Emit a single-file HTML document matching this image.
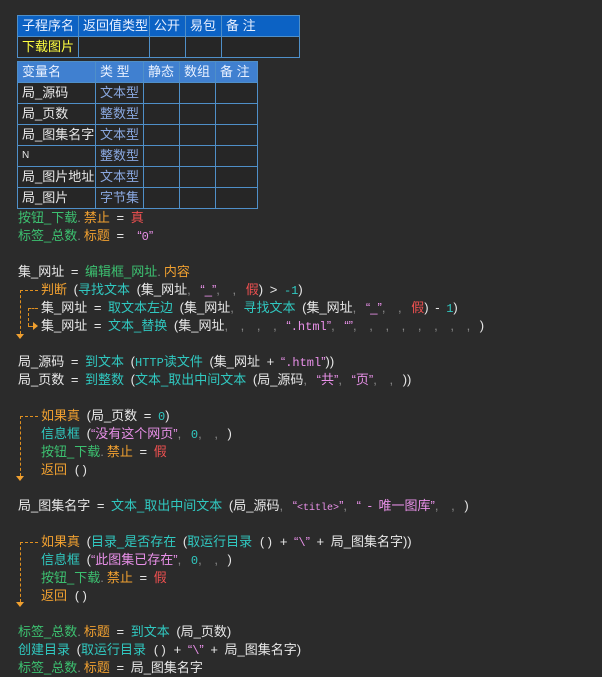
<!DOCTYPE html>
<html><head><meta charset="utf-8"><style>
body{margin:0;width:602px;height:664px;background:#2b2b2b;overflow:hidden;position:relative;font-family:"Liberation Sans","Noto Sans CJK SC","WenQuanYi Zen Hei",sans-serif;font-size:13px;color:#e8e8e8}
table{position:absolute;border-collapse:collapse;font-size:13px}
td{border:1px solid #4f8fc8;padding:0 0 0 4px;height:20px;line-height:20px;white-space:nowrap;background:#262626}
.h1 td{background:#0c62c4;color:#e8f0ff}
.h2 td{background:#4080d0;color:#e8f0ff}
.l{position:absolute;height:18px;line-height:18px;white-space:pre;word-spacing:3px}
.m{font-family:"Liberation Mono",monospace;font-size:12px}
.g{color:#3cc070}.o{color:#f0a030}.c{color:#30c8c0}.p{color:#e890e8}.r{color:#f05050}.w{color:#e8e8e8}.y{color:#ffff40}.b{color:#8aa8e0}.d{color:#888;letter-spacing:3px}
.v{position:absolute;border-left:1px dashed #e09020;width:0}
.hz{position:absolute;border-top:1px dashed #e09020;height:0}
.ad{position:absolute;width:0;height:0;border-left:4px solid transparent;border-right:4px solid transparent;border-top:5px solid #f0a030}
.ar{position:absolute;width:0;height:0;border-top:4px solid transparent;border-bottom:4px solid transparent;border-left:5px solid #f0a030}
</style></head><body>
<table style="left:17px;top:15px">
<tr class="h1"><td style="width:56px">子程序名</td><td style="width:66px">返回值类型</td><td style="width:31px">公开</td><td style="width:31px">易包</td><td style="width:73px">备 注</td></tr>
<tr><td class="y">下载图片</td><td></td><td></td><td></td><td></td></tr>
</table>
<table style="left:17px;top:61px">
<tr class="h2"><td style="width:73px">变量名</td><td style="width:43px">类 型</td><td style="width:31px">静态</td><td style="width:31px">数组</td><td style="width:37px">备 注</td></tr>
<tr><td>局_源码</td><td class="b">文本型</td><td></td><td></td><td></td></tr>
<tr><td>局_页数</td><td class="b">整数型</td><td></td><td></td><td></td></tr>
<tr><td>局_图集名字</td><td class="b">文本型</td><td></td><td></td><td></td></tr>
<tr><td style="font-size:10px">N</td><td class="b">整数型</td><td></td><td></td><td></td></tr>
<tr><td>局_图片地址</td><td class="b">文本型</td><td></td><td></td><td></td></tr>
<tr><td>局_图片</td><td class="b">字节集</td><td></td><td></td><td></td></tr>
</table>

<div class="l" style="left:18px;top:209px"><span class="g">按钮_下载</span><span class="d">.</span><span class="o">禁止</span> = <span class="r">真</span></div>
<div class="l" style="left:18px;top:227px"><span class="g">标签_总数</span><span class="d">.</span><span class="o">标题</span> = <span class="p"> “<span class="m">0</span>”</span></div>

<div class="l" style="left:18px;top:263px">集_网址 = <span class="g">编辑框_网址</span><span class="d">.</span><span class="o">内容</span></div>
<div class="l" style="left:41px;top:281px"><span class="o">判断</span> (<span class="c">寻找文本</span> (集_网址<span class="d">,</span> <span class="p">“_”</span><span class="d">, ,</span> <span class="r">假</span>) &gt; <span class="c m">-1</span>)</div>
<div class="l" style="left:41px;top:299px">集_网址 = <span class="c">取文本左边</span> (集_网址<span class="d">,</span> <span class="c">寻找文本</span> (集_网址<span class="d">,</span> <span class="p">“_”</span><span class="d">, ,</span> <span class="r">假</span>) - <span class="c m">1</span>)</div>
<div class="l" style="left:41px;top:317px">集_网址 = <span class="c">文本_替换</span> (集_网址<span class="d">, , , ,</span> <span class="p">“<span class="m">.html</span>”</span><span class="d">,</span> <span class="p">“”</span><span class="d">, , , , , , , ,</span> )</div>

<div class="l" style="left:18px;top:353px">局_源码 = <span class="c">到文本</span> (<span class="c"><span class="m">HTTP</span>读文件</span> (集_网址 + <span class="p">“<span class="m">.html</span>”</span>))</div>
<div class="l" style="left:18px;top:371px">局_页数 = <span class="c">到整数</span> (<span class="c">文本_取出中间文本</span> (局_源码<span class="d">,</span> <span class="p">“共”</span><span class="d">,</span> <span class="p">“页”</span><span class="d">, ,</span> ))</div>

<div class="l" style="left:41px;top:407px"><span class="o">如果真</span> (局_页数 = <span class="c m">0</span>)</div>
<div class="l" style="left:41px;top:425px"><span class="c">信息框</span> (<span class="p">“没有这个网页”</span><span class="d">,</span> <span class="c m">0</span><span class="d">, ,</span> )</div>
<div class="l" style="left:41px;top:443px"><span class="g">按钮_下载</span><span class="d">.</span><span class="o">禁止</span> = <span class="r">假</span></div>
<div class="l" style="left:41px;top:461px"><span class="o">返回</span> <span class="m">()</span></div>

<div class="l" style="left:18px;top:497px">局_图集名字 = <span class="c">文本_取出中间文本</span> (局_源码<span class="d">,</span> <span class="p">“<span class="m" style="font-size:10px">&lt;title&gt;</span>”</span><span class="d">,</span> <span class="p">“ - 唯一图库”</span><span class="d">, ,</span> )</div>

<div class="l" style="left:41px;top:533px"><span class="o">如果真</span> (<span class="c">目录_是否存在</span> (<span class="c">取运行目录</span> <span class="m">()</span> + <span class="p">“<span class="m">\</span>”</span> + 局_图集名字))</div>
<div class="l" style="left:41px;top:551px"><span class="c">信息框</span> (<span class="p">“此图集已存在”</span><span class="d">,</span> <span class="c m">0</span><span class="d">, ,</span> )</div>
<div class="l" style="left:41px;top:569px"><span class="g">按钮_下载</span><span class="d">.</span><span class="o">禁止</span> = <span class="r">假</span></div>
<div class="l" style="left:41px;top:587px"><span class="o">返回</span> <span class="m">()</span></div>

<div class="l" style="left:18px;top:623px"><span class="g">标签_总数</span><span class="d">.</span><span class="o">标题</span> = <span class="c">到文本</span> (局_页数)</div>
<div class="l" style="left:18px;top:641px"><span class="c">创建目录</span> (<span class="c">取运行目录</span> <span class="m">()</span> + <span class="p">“<span class="m">\</span>”</span> + 局_图集名字)</div>
<div class="l" style="left:18px;top:659px"><span class="g">标签_总数</span><span class="d">.</span><span class="o">标题</span> = 局_图集名字</div>

<div class="hz" style="left:20px;top:290px;width:18px"></div>
<div class="v" style="left:20px;top:290px;height:44px"></div>
<div class="ad" style="left:16px;top:334px"></div>
<div class="hz" style="left:28px;top:308px;width:10px"></div>
<div class="v" style="left:28px;top:308px;height:18px"></div>
<div class="hz" style="left:28px;top:326px;width:5px"></div>
<div class="ar" style="left:33px;top:322px"></div>

<div class="hz" style="left:20px;top:416px;width:18px"></div>
<div class="v" style="left:20px;top:416px;height:60px"></div>
<div class="ad" style="left:16px;top:476px"></div>
<div class="hz" style="left:20px;top:542px;width:18px"></div>
<div class="v" style="left:20px;top:542px;height:60px"></div>
<div class="ad" style="left:16px;top:602px"></div>
</body></html>
